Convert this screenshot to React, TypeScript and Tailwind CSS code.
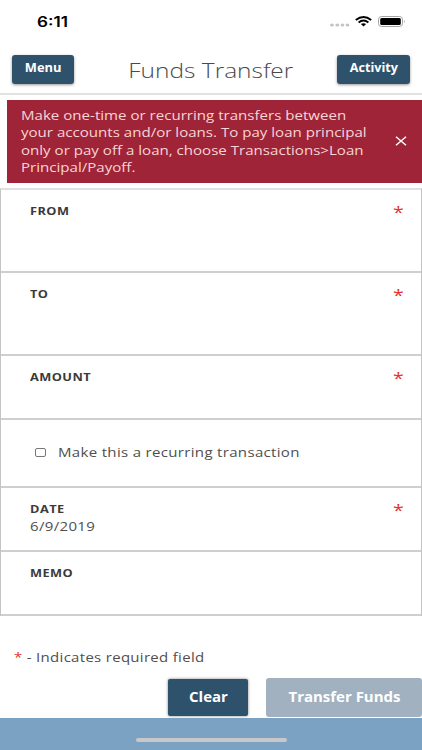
import React, { useState } from 'react';
import clsx from 'clsx';

type WideTextProps = {
  children: React.ReactNode;
  className?: string;
};

function WideText({ children, className }: WideTextProps) {
  return (
    <span className={clsx('inline-block whitespace-nowrap', className)}>
      {children}
    </span>
  );
}

function StatusBar() {
  return (
    <div className="flex h-[43px] items-center justify-between pr-[16px] pl-[37px]">
      <WideText className="origin-left scale-x-[1.225] font-['Inter'] text-[14px] font-semibold text-black">
        6:11
      </WideText>
      <div className="flex items-center">
        <svg width="20" height="4" viewBox="0 0 20 4" className="mt-[7px] mr-[5px]">
          {[2, 7.3, 12.4, 17.5].map((cx) => (
            <ellipse key={cx} cx={cx} cy="2" rx="1.9" ry="1.6" fill="#c4c4c4" />
          ))}
        </svg>
        <svg width="17" height="11" viewBox="0 0 17 11" className="mr-[6px]">
          <path
            d="M0.8 4 Q8.5 -2 16.2 4M3.6 6.4 Q8.5 2.6 13.4 6.4"
            fill="none"
            stroke="#000"
            strokeWidth="1.9"
          />
          <path d="M5.9 8.1 Q8.5 6.2 11.1 8.1 L8.5 10.4Z" fill="#000" />
        </svg>
        <svg width="28" height="11" viewBox="0 0 28 11">
          <rect x="0.5" y="0.5" width="24" height="10" rx="3" fill="none" stroke="#a3a3a3" />
          <rect x="2.2" y="2" width="20.6" height="7" rx="1.5" fill="#000" />
          <path d="M26 3.8 Q27.5 5.5 26 7.2Z" fill="#a3a3a3" />
        </svg>
      </div>
    </div>
  );
}

function Header() {
  return (
    <header className="grid h-[52px] grid-cols-[1fr_auto_1fr] items-start border-b-2 border-[#e2e2e2] px-[12px] pt-[12px]">
      <button className="flex h-[29px] w-[62px] justify-center rounded-[3px] bg-[#2f526c] text-[12px] leading-[26px] font-bold text-white shadow-[0_1px_3px_rgba(0,0,0,0.4)]">
        <WideText className="origin-center scale-x-[1.07]">Menu</WideText>
      </button>
      <h1 className="text-[21px] leading-[31px] font-light text-[#4a4a4a]">
        <WideText className="origin-center scale-x-[1.165]">Funds Transfer</WideText>
      </h1>
      <button className="flex h-[29px] w-[73px] justify-center justify-self-end rounded-[3px] bg-[#2f526c] text-[12px] leading-[26px] font-bold text-white shadow-[0_1px_3px_rgba(0,0,0,0.4)]">
        <WideText className="origin-center scale-x-[1.05]">Activity</WideText>
      </button>
    </header>
  );
}

function Notice({ onClose }: { onClose: () => void }) {
  return (
    <div className="mt-[5px] ml-[7px] flex h-[83px] items-center justify-between bg-[#9f2437] pr-[15px] pl-[13.5px]">
      <WideText className="origin-left scale-x-[1.134] text-[13.3px] leading-[17.5px] text-[#f6d5d8]">
        Make one-time or recurring transfers between
        <br />
        your accounts and/or loans. To pay loan principal
        <br />
        only or pay off a loan, choose Transactions&gt;Loan
        <br />
        Principal/Payoff.
      </WideText>
      <button onClick={onClose} aria-label="Close" className="mb-px">
        <svg width="12" height="10" viewBox="0 0 12 10">
          <path d="M1 0.8 L11 9.2 M11 0.8 L1 9.2" stroke="#fff" strokeWidth="1.5" />
        </svg>
      </button>
    </div>
  );
}

type FieldProps = {
  label: string;
  value?: string;
  required?: boolean;
  className?: string;
};

function Field({ label, value, required, className }: FieldProps) {
  return (
    <div
      className={clsx(
        'flex justify-between border-b-2 border-[#cfcfcf] pt-[13px] pr-[17px] pl-[28.5px]',
        className,
      )}
    >
      <div className="flex flex-col items-start">
        <WideText className="origin-left scale-x-[1.13] text-[11.3px] leading-[16px] font-bold tracking-[0.4px] text-[#3a3a3a]">
          {label}
        </WideText>
        {value && (
          <WideText className="origin-left scale-x-[1.13] text-[13.3px] leading-[18px] tracking-[0.28px] text-[#4f4f4f]">
            {value}
          </WideText>
        )}
      </div>
      {required && (
        <WideText className="origin-right scale-x-[1.218] text-[16px] leading-[18px] text-[#e53228]">
          *
        </WideText>
      )}
    </div>
  );
}

function App() {
  const [noticeOpen, setNoticeOpen] = useState(true);
  const [recurring, setRecurring] = useState(false);

  return (
    <div className="flex h-[750px] w-[422px] flex-col overflow-hidden bg-white font-['Open_Sans',sans-serif]">
      <StatusBar />
      <Header />
      {noticeOpen && <Notice onClose={() => setNoticeOpen(false)} />}

      <main className="mt-[5px] border-x-[1.5px] border-t-2 border-x-[#c4c4c4] border-t-[#e0e0e0]">
        <Field label="FROM" required className="h-[83px]" />
        <Field label="TO" required className="h-[83px]" />
        <Field label="AMOUNT" required className="h-[64px]" />
        <label className="flex h-[68px] items-center border-b-2 border-[#cfcfcf] pl-[34px]">
          <input
            type="checkbox"
            checked={recurring}
            onChange={() => setRecurring(!recurring)}
            className="mb-px h-[9px] w-[11px] appearance-none rounded-[2px] border border-[#777] checked:bg-[#2f526c]"
          />
          <WideText className="ml-[12px] origin-left scale-x-[1.13] text-[13.3px] tracking-[0.28px] text-[#4f4f4f]">
            Make this a recurring transaction
          </WideText>
        </label>
        <Field label="DATE" value="6/9/2019" required className="h-[64px]" />
        <Field label="MEMO" className="h-[64px]" />
      </main>

      <p className="mt-[32px] pl-[14px] text-[13.3px] leading-[18px] tracking-[0.28px] text-[#4f4f4f]">
        <WideText className="origin-left scale-x-[1.125]">
          <span className="text-[#e53228]">*</span> - Indicates required field
        </WideText>
      </p>

      <div className="mt-[12px] flex justify-end gap-[18px]">
        <button className="mt-px h-[37px] w-[80px] rounded-[2px] bg-[#2f526c] text-[13.5px] font-bold text-white shadow-[0_0_3px_rgba(0,0,0,0.5)]">
          <WideText className="origin-center scale-x-[1.11]">Clear</WideText>
        </button>
        <button className="h-[39px] w-[156px] rounded-[3px] bg-[#a1b1bf] text-[13.5px] font-bold text-white">
          <WideText className="origin-center scale-x-[1.11]">Transfer Funds</WideText>
        </button>
      </div>

      <footer className="mt-auto flex h-[32px] justify-center bg-[#7ba2c3] pt-[20px]">
        <div className="h-[4px] w-[151px] rounded-full bg-[#c8c8ca]" />
      </footer>
    </div>
  );
}

export default App;
